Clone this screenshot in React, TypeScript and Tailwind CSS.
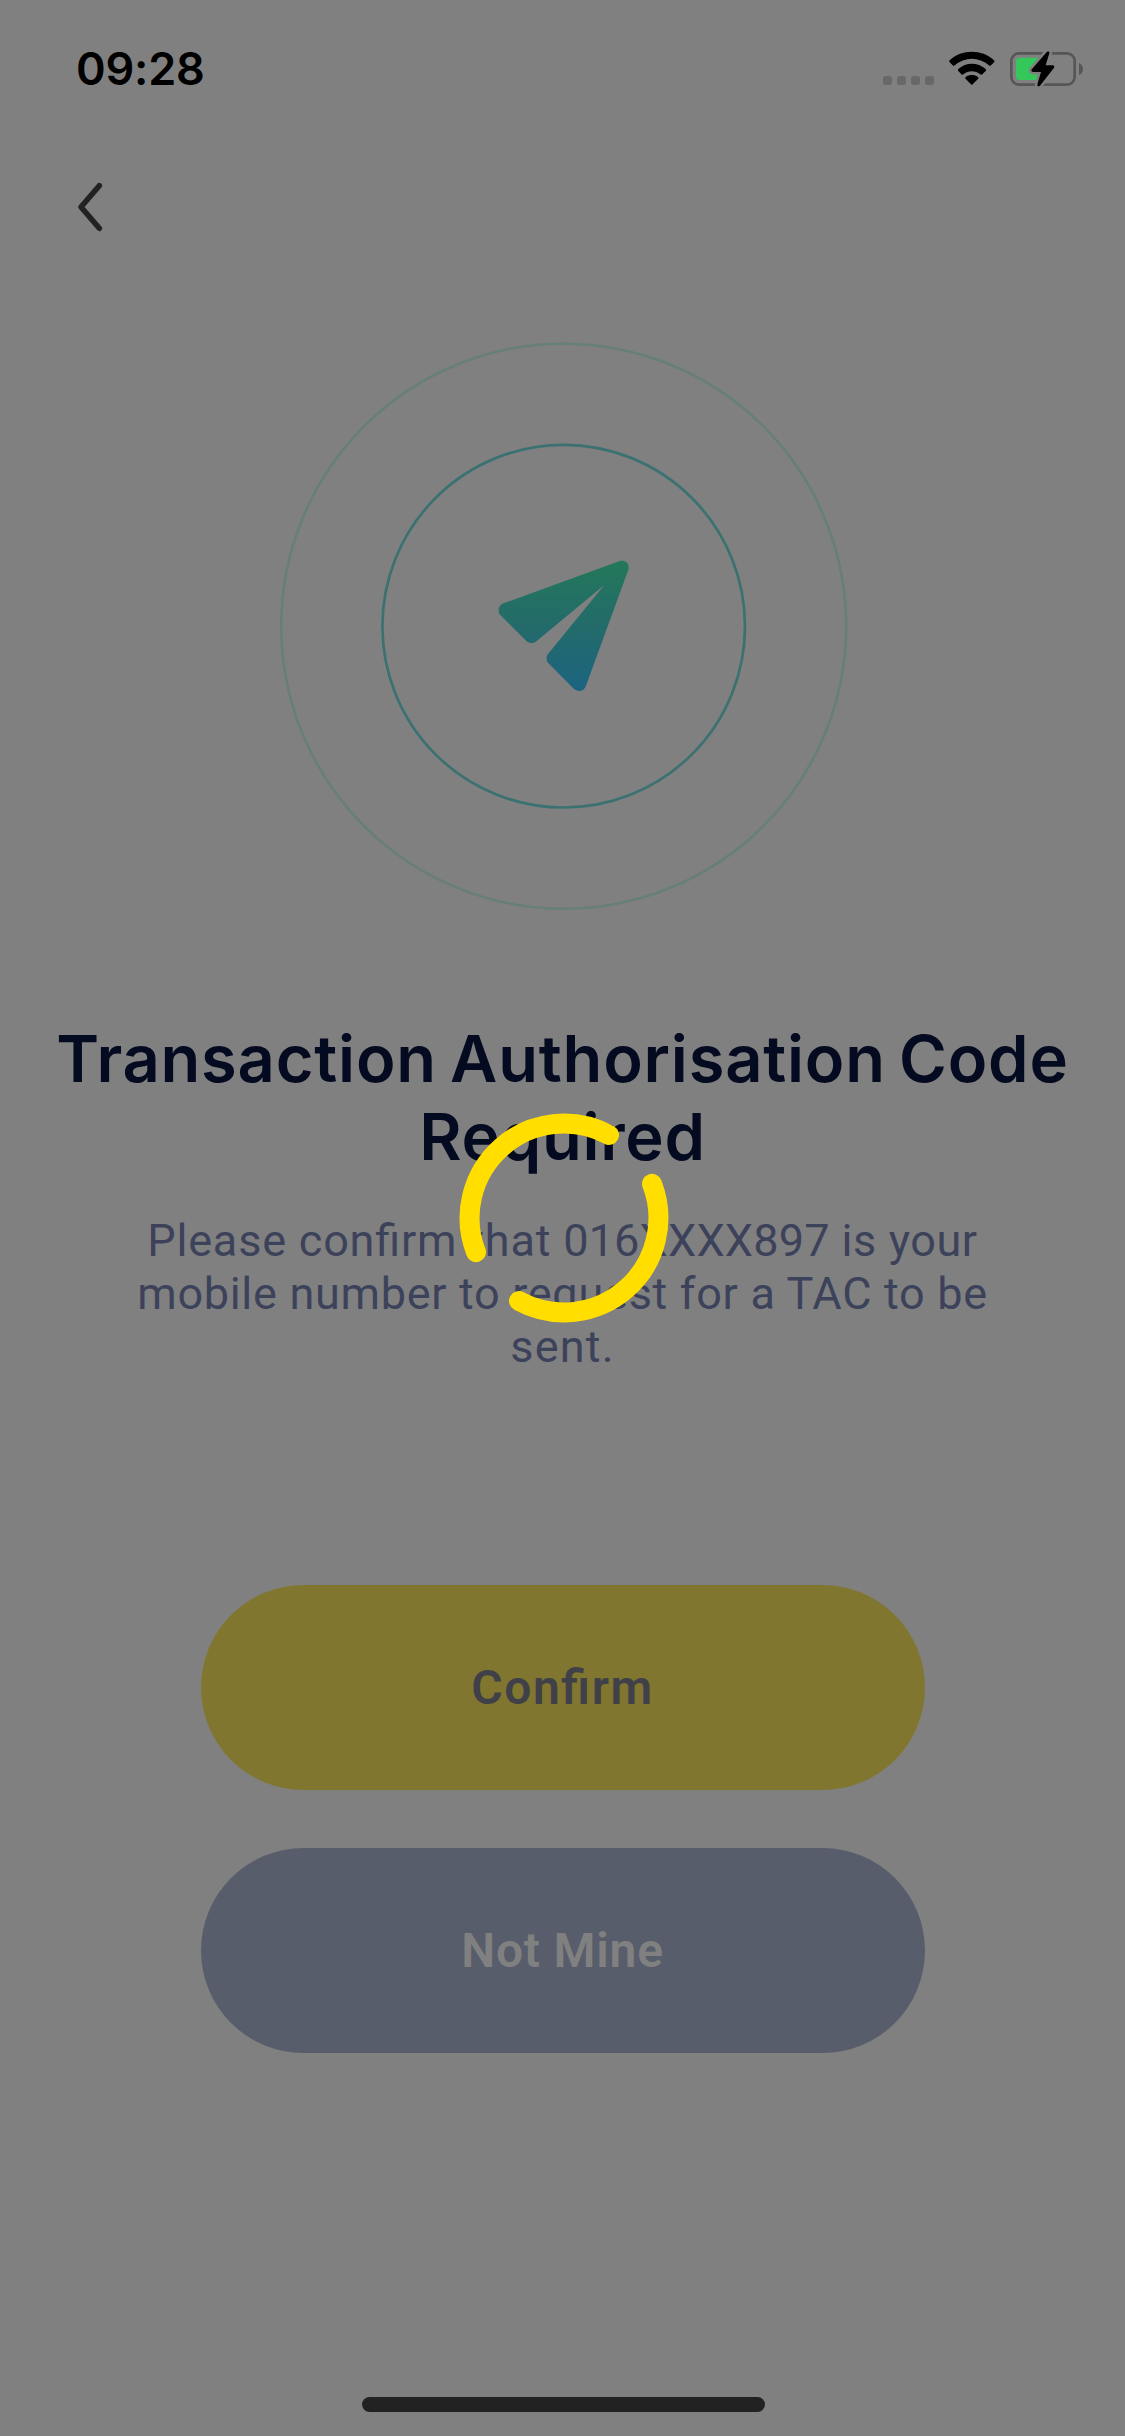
function StatusBar() {
  return (
    <header className="flex h-[132px] items-start justify-between pt-[45px] pr-[40px] pl-[76px]">
      <time className="font-['Inter',sans-serif] text-[45px] leading-[48px] font-semibold tracking-[-0.2px] text-black">09:28</time>
      <div className="flex items-start">
        <div className="mt-[31px] flex gap-[5px]">
          <span className="size-[9px] rounded-[2.5px] bg-[#686868]" />
          <span className="size-[9px] rounded-[2.5px] bg-[#686868]" />
          <span className="size-[9px] rounded-[2.5px] bg-[#686868]" />
          <span className="size-[9px] rounded-[2.5px] bg-[#686868]" />
        </div>
        <svg className="mt-[5px] ml-[13px] h-[37px] w-[50px]" viewBox="261 60 150 111">
          <path
            d="M269 97 Q266 94 269 91 C306 57 365 57 402 91 Q405 94 402 97 L393 106 Q390 109 387 106 C357 80 314 80 284 106 Q281 109 278 106Z"
            fill="#000"
          />
          <path
            d="M295 123 Q292 120 295 117 C318 96 353 96 377 117 Q380 120 377 123 L367 133 Q364 136 361 133 C346 121 325 121 310 133 Q307 136 304 133Z"
            fill="#000"
          />
          <path d="M317 147 Q314 144 317 141 C328 133 343 133 354 141 Q357 144 354 147 L338 163 Q335.500 166 333 163Z" fill="#000" />
        </svg>
        <svg className="mt-[5px] ml-[12px] h-[37px] w-[76px]" viewBox="447 60 228 111">
          <rect x="454" y="70" width="190" height="94" rx="23" fill="none" stroke="#565656" strokeWidth="8" />
          <path d="M657 99 Q669 105 669 117 Q669 129 657 135Z" fill="#565656" />
          <path d="M480 83 H543 V150 H480 Q468 150 468 138 V95 Q468 83 480 83Z" fill="#34c759" />
          <path
            d="M561 65 Q570 62 568 70 L557 106 H579 Q586 109 581 115 L540 167 Q531 172 532 163 L543 126 H518 Q511 123 516 117Z"
            fill="#000"
            stroke="#808080"
            strokeWidth="15"
            strokeLinejoin="round"
            paintOrder="stroke"
          />
        </svg>
      </div>
    </header>
  );
}

function SendArt() {
  return (
    <svg className="ml-[278px] h-[570px] w-[570px]" viewBox="278 341 570 570">
      <defs>
        <linearGradient id="plane" x1="0" y1="0" x2="0" y2="1">
          <stop offset="0" stopColor="#23785a" />
          <stop offset="0.5" stopColor="#236b6a" />
          <stop offset="1" stopColor="#1c6480" />
        </linearGradient>
      </defs>
      <circle cx="563.700" cy="626.200" r="282.500" fill="none" stroke="#667f78" strokeWidth="2.500" />
      <circle cx="563.700" cy="626.200" r="181.300" fill="none" stroke="#3b7271" strokeWidth="2.700" />
      <path
        transform="translate(460 520) scale(.33333)"
        d="M477 124 C495 118 510 131 505 149 L378 497 C373 514 354 517 342 507 L264 428 C257 420 259 409 264 402 L433 195 L230 363 C222 371 208 371 200 364 L120 284 C112 273 115 256 130 250Z"
        fill="url(#plane)"
      />
    </svg>
  );
}

function Spinner() {
  return (
    <svg className="absolute top-[1108px] left-[454px] h-[220px] w-[220px]" viewBox="-110 -110 220 220">
      <g fill="none" stroke="#ffde00" strokeWidth="20" strokeLinecap="round">
        <path d="M45 -83 A94.400 94.400 0 0 0 -88 34.200" />
        <path d="M-45 83 A94.400 94.400 0 0 0 88 -34.200" />
      </g>
    </svg>
  );
}

export default function App() {
  return (
    <main className="relative flex h-[2436px] w-[1125px] flex-col overflow-hidden bg-[#808080] font-['Roboto',sans-serif]">
      <StatusBar />
      <nav className="h-[209px] pt-[46px] pl-[72px]">
        <button className="block" aria-label="Back">
          <svg className="h-[58px] w-[36px]" viewBox="72 178 36 58">
            <path d="M99.300 185.700 L81 207 L99.300 228.300" fill="none" stroke="#222" strokeWidth="5.600" strokeLinecap="round" strokeLinejoin="round" />
          </svg>
        </button>
      </nav>
      <SendArt />
      <h1 className="mt-[109px] flex flex-col items-center font-['Inter',sans-serif] text-[65px] leading-[78px] font-semibold whitespace-nowrap text-[#040a20]">
        <span className="tracking-[0.8px] [word-spacing:-4px]">Transaction Authorisation Code</span>
        <span className="tracking-[0.7px]">Required</span>
      </h1>
      <p className="mt-[38px] flex flex-col items-center text-[45px] leading-[53px] whitespace-nowrap text-[#3d425b] [font-feature-settings:'liga']">
        <span>
          <span className="tracking-[0.8px]">Please confirm that </span>
          <span className="tracking-[0.2px]">016XXXX897</span>
          <span className="tracking-[0.6px]"> is your</span>
        </span>
        <span className="tracking-[0.7px]">mobile number to request for a TAC to be</span>
        <span className="tracking-[1.2px]">sent.</span>
      </p>
      <div className="mt-[212px] flex flex-col items-center gap-[58px] text-[48px] font-semibold">
        <button className="h-[205px] w-[724px] rounded-full bg-[#807630] tracking-[1.6px] text-[#404048] [font-feature-settings:'liga']">Confirm</button>
        <button className="h-[205px] w-[724px] rounded-full bg-[#585d6b] tracking-[0.8px] text-[#808080]">Not Mine</button>
      </div>
      <div className="mt-auto mb-[24px] ml-[362px] h-[15px] w-[403px] rounded-full bg-[#222222]" />
      <Spinner />
    </main>
  );
}
